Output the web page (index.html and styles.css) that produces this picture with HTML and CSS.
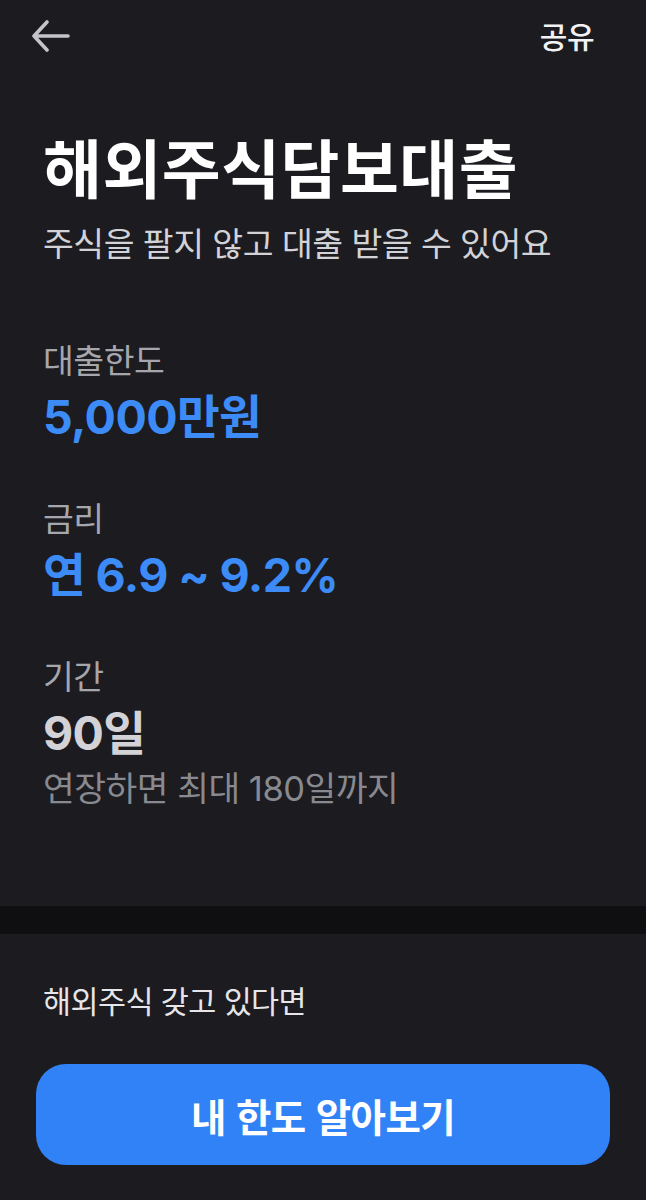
FILE: index.html
```html
<!DOCTYPE html>
<html lang="ko">
<head>
<meta charset="utf-8">
<title>해외주식담보대출</title>
<link rel="stylesheet" href="styles.css">
</head>
<body>
<div class="page">
  <header class="topbar">
    <svg class="back" width="38" height="34" viewBox="0 0 38 34" aria-hidden="true">
      <path d="M15 3 L2 17 L15 31 M2 17 H36" fill="none" stroke="#c4c4c9" stroke-width="3.6" stroke-linecap="round" stroke-linejoin="round"/>
    </svg>
    <span class="share">공유</span>
  </header>

  <section class="intro">
    <h1 class="title">해외주식담보대출</h1>
    <p class="subtitle">주식을 팔지 않고 대출 받을 수 있어요</p>
  </section>

  <section class="facts">
    <div class="fact fact-first">
      <div class="label">대출한도</div>
      <div class="value value-blue">5,000만원</div>
    </div>
    <div class="fact">
      <div class="label">금리</div>
      <div class="value value-blue">연 6.9 ~ 9.2%</div>
    </div>
    <div class="fact">
      <div class="label">기간</div>
      <div class="value value-gray">90일</div>
      <div class="note">연장하면 최대 180일까지</div>
    </div>
  </section>

  <div class="divider"></div>

  <section class="cta">
    <p class="cta-text">해외주식 갖고 있다면</p>
    <button class="cta-button">내 한도 알아보기</button>
  </section>
</div>
</body>
</html>
```

FILE: styles.css
```css
html, body {
  margin: 0;
  padding: 0;
  background: #1b1b20;
}

body {
  font-family: "Inter", "Noto Sans CJK KR", sans-serif;
  color: #ffffff;
}

.page {
  width: 646px;
  min-height: 1200px;
  background: #1b1b20;
}

.topbar {
  height: 70px;
  display: flex;
  align-items: center;
  justify-content: space-between;
  padding: 0 52px 0 32px;
}

.back {
  display: block;
  margin-top: 1px;
}

.share {
  font-family: "Noto Sans CJK KR", sans-serif;
  font-size: 30px;
  font-weight: 500;
  color: #f2f2f4;
  letter-spacing: -0.5px;
  line-height: 40px;
}

.intro {
  padding: 0 43px;
}

.title {
  margin: 59px 0 0;
  font-family: "Noto Sans CJK KR", sans-serif;
  font-size: 64px;
  font-weight: 700;
  line-height: 72px;
  letter-spacing: 0.5px;
  color: #ffffff;
}

.subtitle {
  margin: 19px 0 0;
  font-family: "Noto Sans CJK KR", sans-serif;
  font-size: 33.5px;
  font-weight: 400;
  line-height: 44px;
  letter-spacing: -0.5px;
  color: #d2d2d7;
}

.facts {
  padding: 0 43px;
}

.fact {
  margin-top: 50px;
}

.fact-first {
  margin-top: 73px;
}

.label {
  font-family: "Noto Sans CJK KR", sans-serif;
  font-size: 33.5px;
  line-height: 44px;
  letter-spacing: -0.5px;
  color: #a6a6ad;
}

.value {
  margin-top: 8px;
  font-size: 46.5px;
  font-weight: 700;
  line-height: 56px;
  letter-spacing: -0.6px;
}

.value-blue {
  color: #3d8bf6;
}

.value-gray {
  color: #d2d2d7;
}

.note {
  margin-top: 8px;
  font-size: 34.5px;
  line-height: 40px;
  letter-spacing: -0.5px;
  color: #898990;
}

.divider {
  margin-top: 97px;
  height: 28px;
  background: #0f0f12;
}

.cta {
  padding: 44px 36px 0;
}

.cta-text {
  margin: 0;
  padding-left: 7px;
  font-family: "Noto Sans CJK KR", sans-serif;
  font-size: 30.5px;
  line-height: 44px;
  letter-spacing: -0.6px;
  color: #e6e6ea;
}

.cta-button {
  display: block;
  width: 100%;
  height: 101px;
  margin-top: 42px;
  border: 0;
  border-radius: 30px;
  background: #3182f6;
  color: #ffffff;
  font-family: "Noto Sans CJK KR", sans-serif;
  font-size: 38.5px;
  font-weight: 600;
  letter-spacing: -0.6px;
  padding: 0;
}
```
